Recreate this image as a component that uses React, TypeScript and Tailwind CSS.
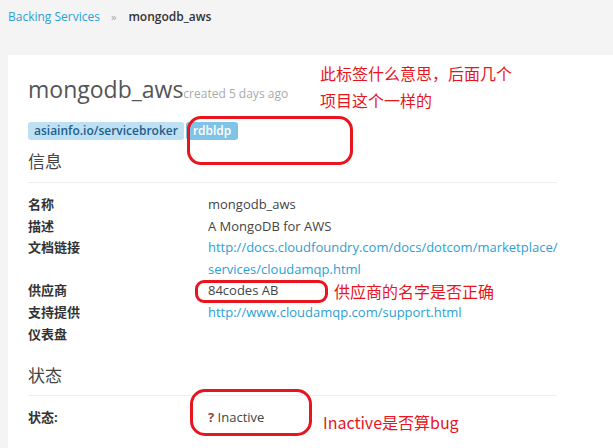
import React from "react";

const rows: { label: string; value: React.ReactNode }[] = [
  { label: "名称", value: "mongodb_aws" },
  { label: "描述", value: "A MongoDB for AWS" },
  {
    label: "文档链接",
    value: (
      <a className="text-[#2a9fd6]">
        http://docs.cloudfoundry.com/docs/dotcom/marketplace/
        <br />
        services/cloudamqp.html
      </a>
    ),
  },
  { label: "供应商", value: "84codes AB" },
  {
    label: "支持提供",
    value: <a className="text-[#2a9fd6]">http://www.cloudamqp.com/support.html</a>,
  },
  { label: "仪表盘", value: "" },
];

const Note = ({ className, children }: { className: string; children: React.ReactNode }) => (
  <div className={"absolute text-[#e8141e] font-['Noto_Sans_CJK_SC',sans-serif] " + className}>
    {children}
  </div>
);

export default function App() {
  return (
    <div className="relative w-[613px] h-[448px] overflow-hidden bg-[#f4f4f4] font-['Open_Sans','Noto_Sans_CJK_SC',sans-serif] text-[#333]">
      <div className="flex items-center px-2 pt-[7px] text-[12px] leading-5">
        <a className="text-[#2a9fd6]">Backing Services</a>
        <span className="ml-[11px] mr-[12px] text-[#aaa] text-[11px]">»</span>
        <span className="font-semibold text-[#333]">mongodb_aws</span>
      </div>

      <div className="ml-2 mt-[28px] h-[400px] bg-white pl-5 pt-4">
        <div className="w-[529px]">
          <div className="flex items-baseline">
            <h1 className="text-[23px] leading-9 text-[#555]">mongodb_aws</h1>
            <span className="text-[12px] text-[#aaa]">created 5 days ago</span>
          </div>

          <div className="mt-[15px] flex gap-[2px] text-[12px] font-semibold leading-[18px]">
            <span className="rounded-[3px] bg-[#bde0f3] px-[6px] text-[#1f5f8b]">asiainfo.io/servicebroker</span>
            <span className="rounded-[3px] bg-[#7fc3e8] px-[7px] text-white">rdbldp</span>
          </div>

          <h2 className="mt-[10px] border-b border-[#eee] pb-2 text-[17px] leading-6 text-[#444]">信息</h2>

          <div className="mt-[11px] grid grid-cols-[180px_1fr] text-[13px] leading-[21.6px]">
            {rows.map((r) => (
              <React.Fragment key={r.label}>
                <div className="font-bold text-[#333]">{r.label}</div>
                <div className="text-[#444]">{r.value || "\u00a0"}</div>
              </React.Fragment>
            ))}
          </div>

          <h2 className="mt-[19px] border-b border-[#eee] pb-[7px] text-[17px] leading-6 text-[#444]">状态</h2>

          <div className="mt-[11px] grid grid-cols-[180px_1fr] text-[13px] leading-[21.6px]">
            <div className="font-bold text-[#333]">状态:</div>
            <div className="text-[#444]">
              <span className="font-bold text-[#8a4a4a]">?</span> Inactive
            </div>
          </div>
        </div>
      </div>

      <div className="absolute left-[187px] top-[116px] h-[49px] w-[166px] rounded-[14px] border-[3px] border-[#e8141e]" />
      <div className="absolute left-[195px] top-[280px] h-[23px] w-[133px] rounded-[9px] border-[3px] border-[#e8141e]" />
      <div className="absolute left-[190px] top-[389px] h-[47px] w-[122px] rounded-[15px] border-[3px] border-[#e8141e]" />

      <Note className="left-[320px] top-[60px] text-[16px] leading-[27px]">
        此标签什么意思，后面几个
        <br />
        项目这个一样的
      </Note>
      <Note className="left-[334px] top-[280px] text-[16px] leading-[22px]">供应商的名字是否正确</Note>
      <Note className="left-[323px] top-[410px] text-[16px] leading-6">Inactive是否算bug</Note>
    </div>
  );
}
